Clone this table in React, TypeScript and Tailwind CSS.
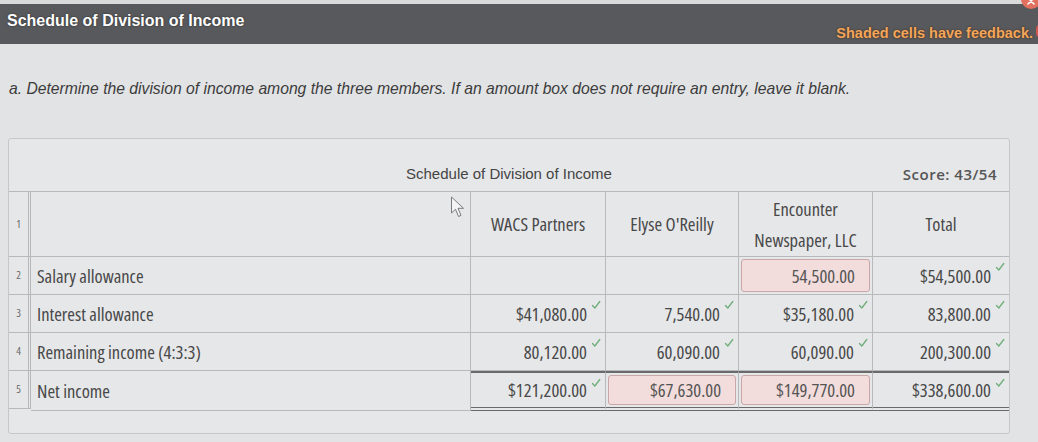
import React from "react";

const Check = () => (
  <svg className="absolute right-[4px] top-[5px]" width="10" height="10" viewBox="0 0 10 10">
    <path d="M1.5 5.5 L3.8 8 L8.8 1.5" fill="none" stroke="#6fae7a" strokeWidth="1.3" strokeLinecap="round" strokeLinejoin="round" />
  </svg>
);

type Cell = { v: string; ok?: boolean; pink?: boolean };

const rows: { n: string; label: string; cells: Cell[] }[] = [
  {
    n: "2",
    label: "Salary allowance",
    cells: [{ v: "" }, { v: "" }, { v: "54,500.00", pink: true }, { v: "$54,500.00", ok: true }],
  },
  {
    n: "3",
    label: "Interest allowance",
    cells: [
      { v: "$41,080.00", ok: true },
      { v: "7,540.00", ok: true },
      { v: "$35,180.00", ok: true },
      { v: "83,800.00", ok: true },
    ],
  },
  {
    n: "4",
    label: "Remaining income (4:3:3)",
    cells: [
      { v: "80,120.00", ok: true },
      { v: "60,090.00", ok: true },
      { v: "60,090.00", ok: true },
      { v: "200,300.00", ok: true },
    ],
  },
  {
    n: "5",
    label: "Net income",
    cells: [
      { v: "$121,200.00", ok: true },
      { v: "$67,630.00", pink: true },
      { v: "$149,770.00", pink: true },
      { v: "$338,600.00", ok: true },
    ],
  },
];

export default function App() {
  const narrow = { fontFamily: '"Open Sans", "Liberation Sans", Arial, sans-serif', fontStretch: "75%" };
  return (
    <div
      className="relative w-[1038px] h-[442px] overflow-hidden bg-[#e2e3e5] text-[#333]"
      style={{ fontFamily: '"Liberation Sans", Arial, sans-serif' }}
    >
      <div className="h-[4px] bg-[#d9dadc]" />
      <div className="flex h-[40px] justify-between bg-[#58595c] pl-[7px] pr-[5px]">
        <div className="pt-[7px] text-[16px] font-bold leading-[20px] text-white [text-shadow:0_0_2px_rgba(0,0,0,0.6)]">
          Schedule of Division of Income
        </div>
        <div className="self-end pb-[2px] text-[14.5px] font-bold leading-[18px] text-[#f4a65c] [text-shadow:0_0_2px_rgba(60,30,0,0.9)]">
          Shaded cells have feedback.
        </div>
      </div>

      <div className="mt-[36px] pl-[9px] text-[15.7px] italic leading-[18px] text-[#3c3c3c]">
        a. Determine the division of income among the three members. If an amount box does not require an entry, leave it blank.
      </div>

      <div className="ml-[8px] mt-[40px] w-[1002px] rounded-[3px] border border-[#c6c7c9] bg-[#e6e7e9] pb-[22px]">
        <div className="relative flex h-[52px] items-end justify-center pb-[8px]">
          <span className="text-[15px] leading-[18px] text-[#444]">Schedule of Division of Income</span>
          <span
            className="absolute right-[12px] bottom-[7px] text-[15px] font-semibold leading-[20px] tracking-[0.5px] text-[#555]"
            style={{ fontFamily: '"Open Sans", sans-serif' }}
          >
            Score: 43/54
          </span>
        </div>

        <div
          className="grid border-t border-[#b8b9bb] text-[#484848]"
          style={{ ...narrow, gridTemplateColumns: "22px 440px 135px 133px 134px 136px" }}
        >
          {/* header row */}
          <div className="flex h-[65px] items-center justify-center border-r-[3px] border-b border-double border-[#b8b9bb] text-[11px] text-[#666]">
            1
          </div>
          <div className="border-r border-b border-[#b8b9bb]" />
          <div className="flex items-center justify-center border-r border-b border-[#b8b9bb] text-[18.5px]">
            WACS Partners
          </div>
          <div className="flex items-center justify-center border-r border-b border-[#b8b9bb] text-[18.5px]">
            Elyse O'Reilly
          </div>
          <div className="flex flex-col items-center justify-center border-r border-b border-[#b8b9bb] text-[18.5px] leading-[31px]">
            <span>Encounter</span>
            <span>Newspaper, LLC</span>
          </div>
          <div className="flex items-center justify-center border-b border-[#b8b9bb] text-[18.5px]">Total</div>

          {rows.map((r, ri) => {
            const last = ri === rows.length - 1;
            return (
              <React.Fragment key={r.n}>
                <div className="flex h-[38px] items-center justify-center border-r-[3px] border-b border-double border-[#b8b9bb] text-[11px] text-[#666]">
                  {r.n}
                </div>
                <div className="flex items-center border-r border-b border-[#b8b9bb] pl-[6px] text-[18.5px]">
                  {r.label}
                </div>
                {r.cells.map((c, ci) => {
                  const borderCls = last
                    ? "border-t-2 border-t-[#6a6a6a] border-b-4 border-b-[#6a6a6a] border-double"
                    : "border-b border-b-[#b8b9bb]";
                  const rightCls = ci < 3 ? "border-r border-r-[#b8b9bb]" : "";
                  return (
                    <div key={ci} className={`relative flex items-stretch ${borderCls} ${rightCls}`}>
                      {c.pink ? (
                        <div className="m-[2px] flex flex-1 items-center justify-end rounded-[3px] border border-[#c9a7a7] bg-[#f2dcdc] pr-[14px] text-[18.5px] text-[#555]">
                          {c.v}
                        </div>
                      ) : (
                        <div className="flex flex-1 items-center justify-end pr-[18px] text-[18.5px]">{c.v}</div>
                      )}
                      {c.ok && <Check />}
                    </div>
                  );
                })}
              </React.Fragment>
            );
          })}
        </div>
      </div>

      {/* close buttons peeking */}
      <svg className="absolute right-[-4px] top-[-8px]" width="22" height="18" viewBox="0 0 22 18">
        <circle cx="11" cy="7" r="10" fill="#e2705f" />
        <path d="M8 6 L14 12 M14 6 L8 12" stroke="#fff" strokeWidth="1.6" strokeLinecap="round" />
      </svg>
      <div className="absolute right-[-8px] top-[24px] h-[14px] w-[10px] rounded-full border-2 border-[#d0584c]" />

      {/* mouse cursor */}
      <svg className="absolute left-[450px] top-[196px]" width="20" height="24" viewBox="0 0 20 24">
        <path
          d="M1.5 1 L1.5 17 L5.5 13.3 L8.5 20.5 L11 19.4 L8 12.3 L13.5 12.3 Z"
          fill="#f4f4f5"
          stroke="#7a7b7e"
          strokeWidth="1"
          strokeLinejoin="round"
        />
      </svg>
    </div>
  );
}
